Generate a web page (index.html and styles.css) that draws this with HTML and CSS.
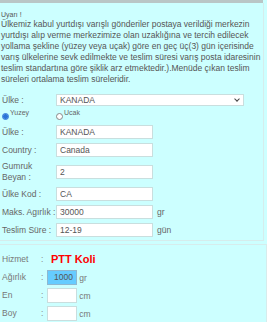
FILE: index.html
```html
<!DOCTYPE html>
<html lang="tr">
<head>
    <meta charset="UTF-8">
    <meta name="viewport" content="width=device-width, initial-scale=1.0">
    <title>Yurtdışı Gönderi</title>
    <link rel="stylesheet" href="styles.css">
</head>
<body>
    <div class="topbar"></div>

    <div class="box info">
        <p class="warn-title">Uyarı !</p>
        <p class="warn">
            Ülkemiz kabul yurtdışı varışlı gönderiler postaya verildiği merkezin<br>
            yurtdışı alıp verme merkezimize olan uzaklığına ve tercih edilecek<br>
            yollama şekline (yüzey veya uçak) göre en geç üç(3) gün içerisinde<br>
            varış ülkelerine sevk edilmekte ve teslim süresi varış posta idaresinin<br>
            teslim standartına göre şiklik arz etmektedir.).Menüde çıkan teslim<br>
            süreleri ortalama teslim süreleridir.
        </p>

        <form id="countryForm">
            <div class="row row-select">
                <label for="country">Ülke :</label>
                <div class="select-wrap">
                    <select id="country" name="country">
                        <option value="ca">KANADA</option>
                    </select>
                </div>
            </div>
            <div class="row row-radio">
                <label class="radio"><input type="radio" name="mode" value="yuzey" checked><span>Yuzey</span></label>
                <label class="radio"><input type="radio" name="mode" value="ucak"><span>Ucak</span></label>
            </div>
            <div class="row">
                <label for="ulke">Ülke :</label>
                <input type="text" id="ulke" value="KANADA">
            </div>
            <div class="row">
                <label for="countryName">Country :</label>
                <input type="text" id="countryName" value="Canada">
            </div>
            <div class="row row-tall">
                <label for="beyan">Gumruk<br>Beyan :</label>
                <input type="text" id="beyan" value="2">
            </div>
            <div class="row">
                <label for="kod">Ülke Kod :</label>
                <input type="text" id="kod" value="CA">
            </div>
            <div class="row">
                <label for="maks">Maks. Agırlık :</label>
                <input type="text" id="maks" value="30000">
                <span class="unit">gr</span>
            </div>
            <div class="row">
                <label for="sure">Teslim Süre :</label>
                <input type="text" id="sure" value="12-19">
                <span class="unit">gün</span>
            </div>
        </form>
    </div>

    <div class="box calc">
        <div class="calc-row">
            <span class="calc-label">Hizmet</span>
            <span class="colon">:</span>
            <span class="service">PTT Koli</span>
        </div>
        <div class="calc-row">
            <label class="calc-label" for="agirlik">Ağırlık</label>
            <span class="colon">:</span>
            <span><input type="text" id="agirlik" class="small active" value="1000"> gr</span>
        </div>
        <div class="calc-row">
            <label class="calc-label" for="en">En</label>
            <span class="colon">:</span>
            <span><input type="text" id="en" class="small"> cm</span>
        </div>
        <div class="calc-row">
            <label class="calc-label" for="boy">Boy</label>
            <span class="colon">:</span>
            <span><input type="text" id="boy" class="small"> cm</span>
        </div>
    </div>
</body>
</html>
```

FILE: styles.css
```css
body {
    font-family: "Liberation Sans", Arial, sans-serif;
    font-size: 8.5px;
    background-color: #ccffff;
    color: #555;
    margin: 0;
    overflow: hidden;
}

.topbar {
    width: 263px;
    height: 3px;
    background-color: #b9c6c6;
}

.box {
    border: 0 solid #d6ecec;
}

.info {
    width: 262px;
    border-right-width: 1px;
    border-bottom-width: 1px;
    padding: 7px 0 1px 1px;
}

.warn-title {
    margin: 0;
    font-size: 7px;
    line-height: 9px;
}

.warn {
    margin: 0;
    line-height: 11px;
}

form {
    margin-top: 7px;
    padding-left: 1px;
}

.row {
    display: grid;
    grid-template-columns: 54px 97px auto;
    align-items: center;
    height: 18px;
    color: #666;
}

.row-select {
    height: 16px;
    grid-template-columns: 54px auto;
}

.row-radio {
    height: 14px;
    grid-template-columns: 54px auto;
    margin-bottom: 1px;
}

.row-tall {
    height: 26px;
    line-height: 11px;
}

.radio {
    display: flex;
    align-items: flex-start;
    font-size: 7px;
}

.radio input {
    appearance: none;
    width: 7px;
    height: 7px;
    margin: 3px 1px 0 0;
    border: 1px solid #888;
    border-radius: 50%;
    background-color: #fff;
}

.radio input:checked {
    border-color: #2a74d8;
    background: radial-gradient(circle, #2a74d8 0 2px, #9cc2f2 2.6px);
}

.radio span {
    margin-top: -1px;
}

input[type="text"] {
    box-sizing: border-box;
    height: 14px;
    width: 97px;
    padding: 0 3px;
    border: 1px solid #c9dede;
    background-color: #fff;
    font-family: inherit;
    font-size: 8.5px;
    color: #555;
    margin: 0;
}

.select-wrap {
    position: relative;
    width: 188px;
}

select {
    appearance: none;
    box-sizing: border-box;
    width: 188px;
    height: 12px;
    padding: 0 3px;
    border: 1px solid #c9dede;
    background-color: #fff;
    font-family: inherit;
    font-size: 8.5px;
    color: #555;
    margin: 0;
}

.select-wrap::after {
    content: "";
    position: absolute;
    right: 5px;
    top: 3px;
    width: 3px;
    height: 3px;
    border-right: 1.3px solid #444;
    border-bottom: 1.3px solid #444;
    transform: rotate(45deg);
    pointer-events: none;
}

.unit {
    padding-left: 4px;
}

.calc {
    width: 264px;
    margin-top: 3px;
    border-top-width: 1px;
    border-right-width: 1px;
    padding: 5px 0 0 2px;
}

.calc-row {
    display: grid;
    grid-template-columns: 39px 6px auto;
    align-items: center;
    height: 18px;
    color: #777;
}

.colon {
    color: #888;
}

.service {
    padding-left: 4px;
    font-size: 11px;
    font-weight: bold;
    color: #ff0000;
}

input.small {
    width: 30px;
    height: 15px;
    text-align: right;
}

input.active {
    background-color: #66ccff;
    border-color: #8fb8d0;
}
```
